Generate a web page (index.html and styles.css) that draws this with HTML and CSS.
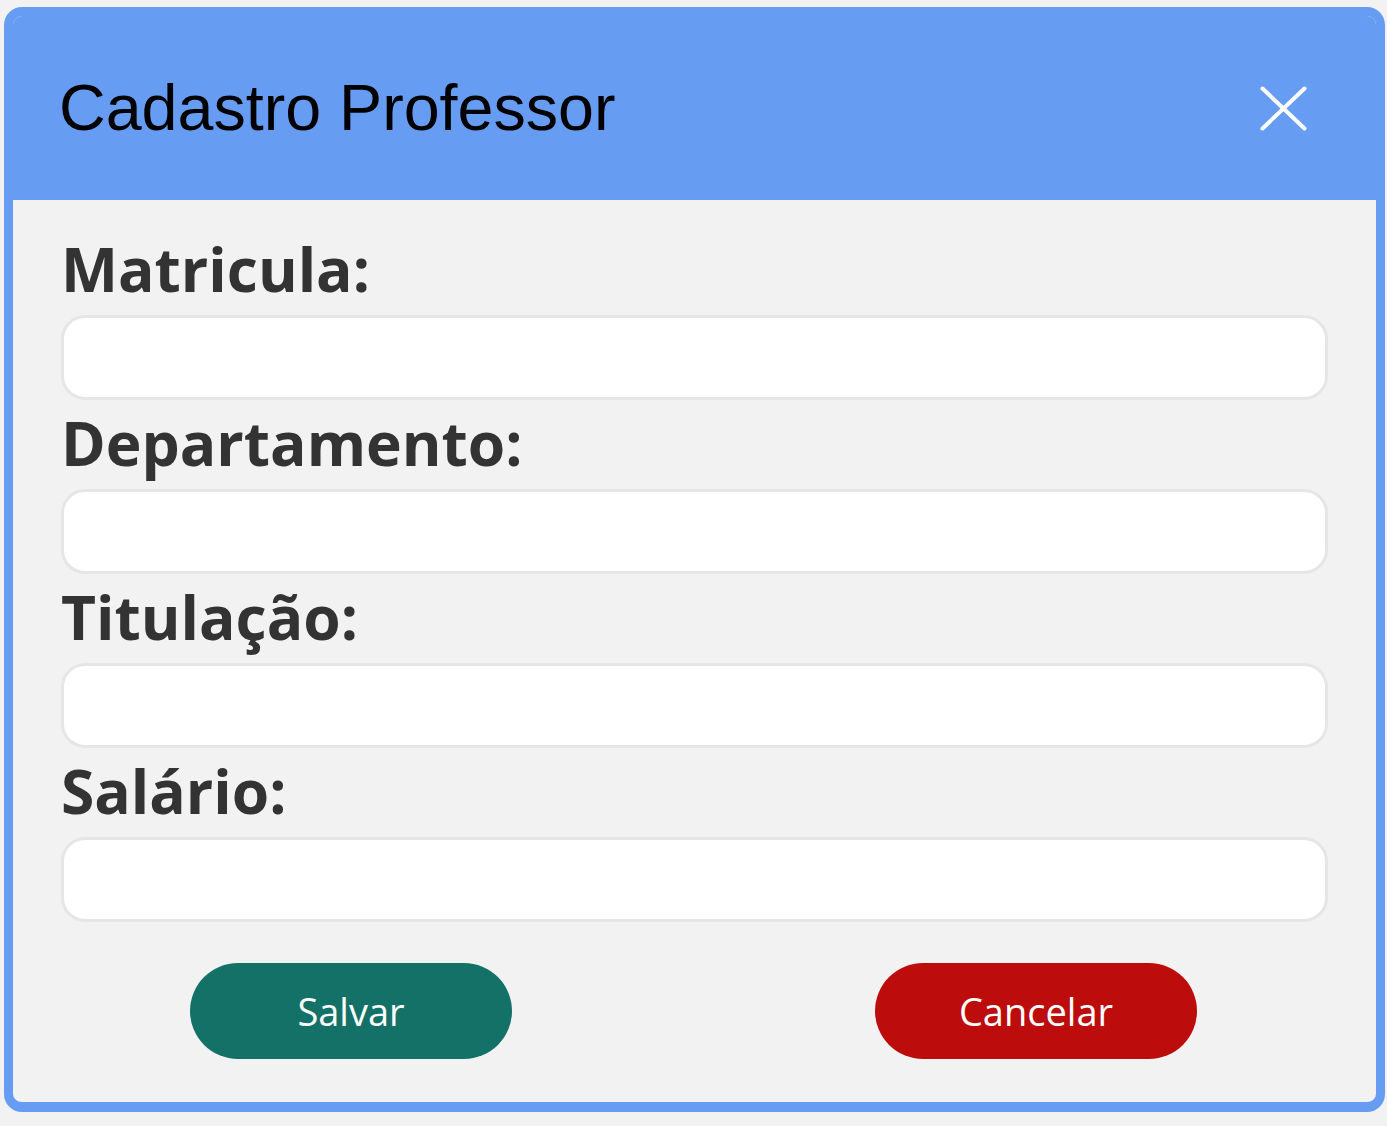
FILE: index.html
```html
<!DOCTYPE html>
<html lang="pt-BR">
<head>
<meta charset="utf-8">
<title>Cadastro Professor</title>
<link rel="stylesheet" href="styles.css">
</head>
<body>
<div class="modal">
  <div class="modal-header">
    <h1 class="modal-title">Cadastro Professor</h1>
    <button class="close-btn" aria-label="Fechar">
      <svg width="47" height="45" viewBox="0 0 47 45">
        <path d="M2.5 2.5 L44.5 42.5 M44.5 2.5 L2.5 42.5" stroke="#ffffff" stroke-width="4" stroke-linecap="round" fill="none"/>
      </svg>
    </button>
  </div>
  <form class="modal-body">
    <div class="field">
      <label class="field-label">Matricula:</label>
      <input class="field-input" type="text">
    </div>
    <div class="field">
      <label class="field-label">Departamento:</label>
      <input class="field-input" type="text">
    </div>
    <div class="field">
      <label class="field-label">Titulação:</label>
      <input class="field-input" type="text">
    </div>
    <div class="field">
      <label class="field-label">Salário:</label>
      <input class="field-input" type="text">
    </div>
    <div class="actions">
      <button type="button" class="btn btn-save">Salvar</button>
      <button type="button" class="btn btn-cancel">Cancelar</button>
    </div>
  </form>
</div>
</body>
</html>
```
FILE: styles.css
```css
* { box-sizing: border-box; }

html, body {
  margin: 0;
  padding: 0;
  background: #f2f2f2;
}

body {
  padding: 7px 2px 0 4px;
  font-family: "Open Sans", "Liberation Sans", sans-serif;
}

.modal {
  width: 1381px;
  height: 1105px;
  border: 9px solid #669df2;
  border-bottom-width: 10px;
  border-radius: 18px;
  background: #f2f2f2;
  overflow: hidden;
  display: flex;
  flex-direction: column;
}

.modal-header {
  height: 184px;
  background: #669df2;
  display: flex;
  align-items: center;
  justify-content: space-between;
  padding: 0 69px 0 46px;
  flex-shrink: 0;
}

.modal-title {
  margin: 0;
  font-family: "Liberation Sans", Arial, sans-serif;
  font-weight: 400;
  font-size: 64.6px;
  line-height: 1;
  color: #000;
}

.close-btn {
  background: none;
  border: 0;
  padding: 0;
  margin: 0;
  width: 47px;
  height: 45px;
  display: block;
  cursor: pointer;
}

.close-btn svg { display: block; }

.modal-body {
  margin: 0;
  padding: 27px 48px 0 48px;
  display: flex;
  flex-direction: column;
}

.field {
  display: flex;
  flex-direction: column;
}

.field-label {
  font-family: "Open Sans", sans-serif;
  font-weight: 700;
  font-size: 60.5px;
  line-height: 84px;
  color: #333333;
  margin-bottom: 4px;
}

.field-input {
  display: block;
  width: 100%;
  height: 85px;
  border: 3px solid #e6e6e6;
  border-radius: 24px;
  background: #ffffff;
  margin: 0 0 1px 0;
  padding: 0 20px;
  font-size: 30px;
  outline: none;
}

.actions {
  display: flex;
  justify-content: space-between;
  margin: 40px 131px 0 129px;
}

.btn {
  width: 322px;
  height: 96px;
  border: 0;
  border-radius: 48px;
  font-family: "Open Sans", sans-serif;
  font-size: 38px;
  font-weight: 400;
  color: #ffffff;
  cursor: pointer;
  padding: 0;
}

.btn-save { background: #137167; }
.btn-cancel { background: #bd0c0c; }
```
